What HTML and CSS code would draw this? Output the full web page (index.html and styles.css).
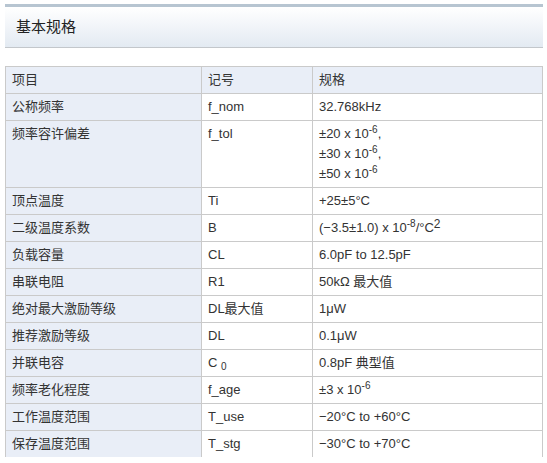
FILE: index.html
```html
<!DOCTYPE html>
<html lang="zh">
<head>
<meta charset="utf-8">
<link rel="stylesheet" href="styles.css">
</head>
<body>
<div class="page">
  <div class="section-head">基本规格</div>
  <table class="spec">
    <colgroup><col class="c1"><col class="c2"><col class="c3"></colgroup>
    <tr class="thead"><td>项目</td><td>记号</td><td>规格</td></tr>
    <tr><td>公称频率</td><td>f_nom</td><td>32.768kHz</td></tr>
    <tr><td class="top">频率容许偏差</td><td class="top">f_tol</td><td class="multi"><div>±20 x 10<sup>-6</sup>,</div><div>±30 x 10<sup>-6</sup>,</div><div>±50 x 10<sup>-6</sup></div></td></tr>
    <tr><td>顶点温度</td><td>Ti</td><td>+25±5°C</td></tr>
    <tr><td>二级温度系数</td><td>B</td><td>(−3.5±1.0) x 10<sup>-8</sup>/°C<sup class="big">2</sup></td></tr>
    <tr><td>负载容量</td><td>CL</td><td>6.0pF to 12.5pF</td></tr>
    <tr><td>串联电阻</td><td>R1</td><td>50kΩ 最大值</td></tr>
    <tr><td>绝对最大激励等级</td><td>DL最大值</td><td>1μW</td></tr>
    <tr><td>推荐激励等级</td><td>DL</td><td>0.1μW</td></tr>
    <tr><td>并联电容</td><td>C <sub>0</sub></td><td>0.8pF 典型值</td></tr>
    <tr><td>频率老化程度</td><td>f_age</td><td>±3 x 10<sup>-6</sup></td></tr>
    <tr><td>工作温度范围</td><td>T_use</td><td>−20°C to +60°C</td></tr>
    <tr class="last"><td>保存温度范围</td><td>T_stg</td><td>−30°C to +70°C</td></tr>
  </table>
</div>
</body>
</html>
```
FILE: styles.css
```css
html, body {
  margin: 0;
  padding: 0;
  background: #fff;
}
body {
  font-family: "Liberation Sans", Arial, "Noto Sans CJK SC", sans-serif;
  font-size: 13px;
  color: #333;
}
.page {
  padding: 4px 4px 0 5px;
}
.section-head {
  border-top: 3px solid #b7c5d1;
  border-bottom: 1px solid #c3c7cb;
  height: 40px;
  line-height: 40px;
  padding-left: 11px;
  font-size: 15px;
  color: #222;
  background: linear-gradient(#ffffff, #e3eaf2);
}
.spec {
  margin-top: 18px;
  width: 538px;
  border-collapse: collapse;
  table-layout: fixed;
}
.c1 { width: 196px; }
.c2 { width: 111px; }
.spec td {
  border: 1px solid #cacaca;
  padding: 4px 6px;
  line-height: 18px;
  height: 18px;
  vertical-align: top;
  background: #fff;
}
.spec tr td:first-child {
  background: #e9eef7;
}
.spec .thead td {
  background: #e9eef7;
  height: 17px;
}
.spec .multi {
  padding: 3px 6px 3px;
}
.spec .multi div {
  line-height: 20px;
  height: 20px;
}
sup, sub {
  font-size: 10px;
  line-height: 0;
}
sup { vertical-align: 5px; }
sup.big { font-size: 12px; vertical-align: 4px; }
sub { vertical-align: -3px; }
.spec .last td { border-bottom: none; }
```
